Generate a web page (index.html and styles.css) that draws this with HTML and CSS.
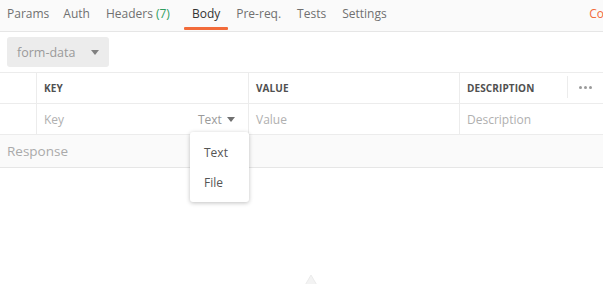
FILE: index.html
```html
<!DOCTYPE html>
<html>
<head>
<meta charset="utf-8">
<link rel="stylesheet" href="styles.css">
</head>
<body>
<div class="tabs">
  <div class="tab">Params</div>
  <div class="tab">Auth</div>
  <div class="tab">Headers <span class="count">(7)</span></div>
  <div class="tab active">Body</div>
  <div class="tab">Pre-req.</div>
  <div class="tab">Tests</div>
  <div class="tab">Settings</div>
  <div class="spacer"></div>
  <div class="tab code">Code</div>
</div>
<div class="toolbar">
  <div class="select">form-data <span class="caret"></span></div>
</div>
<div class="table">
  <div class="row head">
    <div class="cell c0"></div>
    <div class="cell c1">KEY</div>
    <div class="cell c2">VALUE</div>
    <div class="cell c3">DESCRIPTION</div>
    <div class="cell c4"><span class="more"><i></i><i></i><i></i></span></div>
  </div>
  <div class="row body">
    <div class="cell c0"></div>
    <div class="cell c1 ph"><span>Key</span><span class="type">Text <span class="caret small"></span></span></div>
    <div class="cell c2 ph">Value</div>
    <div class="cell c3 ph last">Description</div>
  </div>
</div>
<div class="response">Response</div>
<div class="menu">
  <div class="item">Text</div>
  <div class="item">File</div>
</div>
<div class="empty">
  <svg width="18" height="14" viewBox="0 0 18 14"><path d="M9 1 L16 13 L2 13 Z" fill="#f3f3f3" stroke="#ebebeb" stroke-width="1"/></svg>
</div>
</body>
</html>
```
FILE: styles.css
```css
html, body { margin: 0; padding: 0; background: #fff; overflow: hidden; }
body { font-family: "Open Sans", "Liberation Sans", sans-serif; color: #505050; width: 603px; height: 284px; position: relative; }

.tabs { display: flex; align-items: stretch; height: 31px; background: #fafafa; border-bottom: 1px solid #e6e6e6; padding-left: 7px; white-space: nowrap; overflow: hidden; }
.tab { font-size: 12px; color: #707070; padding: 5px 0 0; margin-right: 16px; position: relative; line-height: 18px; }
.tab:first-child { margin-right: 14px; }
.tab .count { color: #2f9e5f; }
.tab.active { color: #333; padding-left: 8px; padding-right: 8px; margin-left: -2px; margin-right: 8px; }
.tab.active::after { content: ""; position: absolute; left: 0; right: 0; bottom: 1px; height: 3px; background: #f26b3a; border-radius: 1px; }
.spacer { flex: 1; }
.tab.code { color: #f26b3a; margin-right: -15px; }

.toolbar { padding: 5px 7px 5px; height: 30px; }
.select { display: inline-flex; align-items: center; width: 102px; height: 30px; box-sizing: border-box; background: #ececec; border-radius: 3px; padding-left: 10px; font-size: 12.5px; color: #9a9a9a; }
.caret { display: inline-block; width: 0; height: 0; border-left: 4px solid transparent; border-right: 4px solid transparent; border-top: 5px solid #808080; margin-left: 16px; }
.caret.small { margin-left: 2px; border-top-color: #707070; vertical-align: 2px; }

.table { border-top: 1px solid #ececec; }
.row { display: flex; height: 30px; border-bottom: 1px solid #ececec; }
.cell { box-sizing: border-box; border-right: 1px solid #ececec; display: flex; align-items: center; padding-left: 7px; font-size: 12px; }
.c0 { width: 37px; }
.c1 { width: 212px; }
.c2 { width: 211px; }
.c3 { width: 107px; }
.c4 { flex: 1; border-right: none; justify-content: center; padding-left: 0; }
.head .cell { font-size: 10px; font-weight: 700; color: #505050; letter-spacing: 0.1px; }
.head .c3 { border-right: none; }
.head .c4 { border-left: 1px solid #ececec; margin: 3px 0 5px; }
.more { display: flex; gap: 2px; margin-top: 1px; }
.more i { display: block; width: 3px; height: 3px; border-radius: 50%; background: #9a9a9a; }
.ph { color: #b0b0b0; font-size: 12px; }
.body .c1 { justify-content: space-between; padding-right: 13px; }
.type { color: #9a9a9a; }
.last { border-right: none; }

.response { height: 32px; background: #fafafa; border-bottom: 1px solid #e6e6e6; display: flex; align-items: center; padding-left: 7px; font-size: 13.5px; color: #aaa; }

.menu { position: absolute; left: 190px; top: 132px; width: 59px; background: #fff; border-radius: 3px; box-shadow: 0 1px 4px rgba(0,0,0,0.25); padding: 5px 0; }
.item { height: 30px; display: flex; align-items: center; padding-left: 14px; font-size: 12px; color: #555; }

.empty { position: absolute; left: 302px; top: 271px; }
```
